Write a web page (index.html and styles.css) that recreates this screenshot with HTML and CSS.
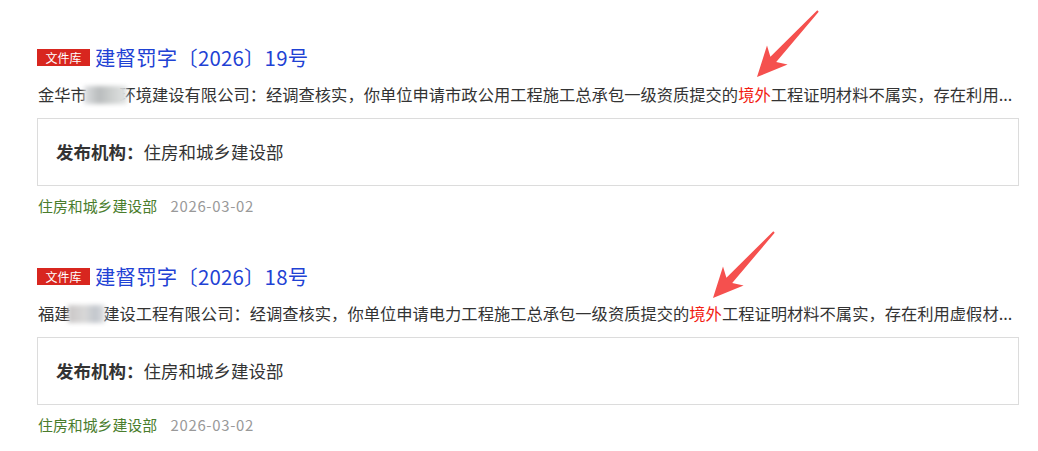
FILE: index.html
```html
<!DOCTYPE html>
<html lang="zh-CN">
  <head>
    <meta charset="UTF-8" />
    <meta name="viewport" content="width=device-width, initial-scale=1.0" />
    <title>文件库</title>
    <link rel="stylesheet" href="styles.css">
  </head>
  <body>
    <div class="result-list">
      <div class="result-item">
        <svg class="pointer pointer-first" viewBox="755 9 66 72" width="66" height="72">
          <polygon points="817.3,10.3 770.4,56.7 767,45.5 757,77 787.6,64.5 776.2,62.1 818.7,11.7" />
        </svg>
        <div class="result-title">
          <span class="tag">文件库</span>
          <a href="#">建督罚字〔2026〕19号</a>
        </div>
        <p class="result-desc">金华市<span class="masked"></span>环境建设有限公司：经调查核实，你单位申请市政公用工程施工总承包一级资质提交的<em>境外</em>工程证明材料不属实，存在利用...</p>
        <div class="result-meta-box">
          <strong>发布机构：</strong>住房和城乡建设部
        </div>
        <div class="result-footer">
          <span class="source">住房和城乡建设部</span>
          <span class="date">2026-03-02</span>
        </div>
      </div>

      <div class="result-item">
        <svg class="pointer pointer-second" viewBox="755 9 66 72" width="66" height="72">
          <polygon points="817.3,10.3 770.4,56.7 767,45.5 757,77 787.6,64.5 776.2,62.1 818.7,11.7" />
        </svg>
        <div class="result-title">
          <span class="tag">文件库</span>
          <a href="#">建督罚字〔2026〕18号</a>
        </div>
        <p class="result-desc">福建<span class="masked masked-wide"></span>建设工程有限公司：经调查核实，你单位申请电力工程施工总承包一级资质提交的<em>境外</em>工程证明材料不属实，存在利用虚假材...</p>
        <div class="result-meta-box">
          <strong>发布机构：</strong>住房和城乡建设部
        </div>
        <div class="result-footer">
          <span class="source">住房和城乡建设部</span>
          <span class="date">2026-03-02</span>
        </div>
      </div>
    </div>
  </body>
</html>
```

FILE: styles.css
```css
body {
  margin: 0;
  background: #fff;
  font-family: "Noto Sans CJK SC", "Noto Sans", sans-serif;
  color: #333;
}
.result-list {
  padding: 42px 0 0 37px;
  width: 982px;
}
.result-item {
  position: relative;
  margin-bottom: 45px;
}
.result-title {
  display: flex;
  align-items: center;
  height: 30px;
}
.tag {
  display: inline-block;
  width: 53px;
  height: 17px;
  line-height: 17px;
  background: #d8261f;
  color: #fff;
  font-size: 12px;
  text-align: center;
  margin-right: 5px;
}
.result-title a {
  color: #1f42d4;
  text-decoration: none;
  font-size: 20.4px;
  line-height: 30px;
  letter-spacing: 0.2px;
}
.result-desc {
  margin: 10px 0 0;
  font-size: 16.3px;
  line-height: 24px;
  white-space: nowrap;
  padding-left: 1px;
}
.result-desc em {
  font-style: normal;
  color: #f21b12;
}
.masked {
  position: relative;
  display: inline-block;
  width: 32.6px;
  height: 18px;
  vertical-align: -3px;
}
.masked::after {
  content: "";
  position: absolute;
  left: -3px;
  right: -8px;
  top: 0;
  bottom: 0;
  background: linear-gradient(90deg, #dfe1e3, #b9bcbd 35%, #cdd0cf 65%, #e2e4e4);
  filter: blur(2px);
}
.masked-wide::after {
  left: -3px;
  right: -2px;
  background: linear-gradient(90deg, #c9c6c6, #d8d8d8 45%, #c2c6cc 75%, #e0e2e4);
}
.result-meta-box {
  margin-top: 12px;
  border: 1px solid #dcdcdc;
  padding: 21px 18px;
  font-size: 17.5px;
  line-height: 24px;
  color: #333;
}
.result-meta-box strong {
  font-weight: 700;
}
.result-footer {
  margin-top: 10px;
  line-height: 20px;
  font-size: 14.9px;
  padding-left: 1px;
}
.source {
  color: #4a7d2c;
  margin-right: 10px;
}
.date {
  color: #999;
  letter-spacing: 0.7px;
}
.pointer {
  position: absolute;
  fill: #f5504e;
}
.pointer-first {
  left: 718px;
  top: -33px;
}
.pointer-second {
  left: 674px;
  top: -31px;
}
```
